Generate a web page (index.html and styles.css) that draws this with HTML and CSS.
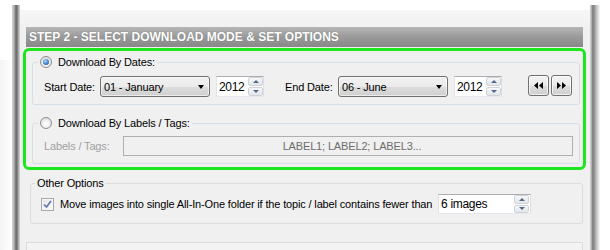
FILE: index.html
```html
<!DOCTYPE html>
<html>
<head>
<meta charset="utf-8">
<link rel="stylesheet" href="styles.css">
</head>
<body>
<div class="frame">
  <div class="lbar"></div>
  <div class="content">
    <div class="header">STEP 2 - SELECT DOWNLOAD MODE &amp; SET OPTIONS</div>
    <div class="green">
      <fieldset class="group g1">
        <legend><span class="radio on"></span>Download By Dates:</legend>
        <div class="row">
          <span class="lbl lbl-start">Start Date:</span>
          <div class="combo"><span>01 - January</span><i class="arrow"></i></div>
          <div class="spin year"><span class="val">2012</span><div class="spinbtns"><b class="up"></b><b class="down"></b></div></div>
          <span class="lbl lbl-end">End Date:</span>
          <div class="combo"><span>06 - June</span><i class="arrow"></i></div>
          <div class="spin year"><span class="val">2012</span><div class="spinbtns"><b class="up"></b><b class="down"></b></div></div>
          <div class="navs">
            <button class="nav"><svg width="9" height="7" viewBox="0 0 9 7"><path d="M4 0V7L0 3.5Z M9 0V7L5 3.5Z" fill="#000"/></svg></button>
            <button class="nav"><svg width="9" height="7" viewBox="0 0 9 7"><path d="M0 0V7L4 3.5Z M5 0V7L9 3.5Z" fill="#000"/></svg></button>
          </div>
        </div>
      </fieldset>
      <fieldset class="group g2">
        <legend><span class="radio"></span>Download By Labels / Tags:</legend>
        <div class="row">
          <span class="lbl dis lbl-tags">Labels / Tags:</span>
          <div class="tags">LABEL1; LABEL2; LABEL3...</div>
        </div>
      </fieldset>
    </div>
    <fieldset class="group other">
      <legend>Other Options</legend>
      <div class="row">
        <span class="check"><svg width="9" height="9" viewBox="0 0 9 9"><path d="M1 4.5L3.5 7L8 1" fill="none" stroke="#6476a8" stroke-width="1.7"/></svg></span>
        <span class="movetext">Move images into single All-In-One folder if the topic / label contains fewer than</span>
        <div class="spin count"><span class="val">6 images</span><div class="spinbtns"><b class="up"></b><b class="down"></b></div></div>
      </div>
    </fieldset>
    <div class="bottom"></div>
  </div>
  <div class="rbar"></div>
</div>
</body>
</html>
```

FILE: styles.css
```css
html, body {
  margin: 0;
  padding: 0;
  background: #ffffff;
}
body {
  font-family: "Liberation Sans", Arial, sans-serif;
  font-size: 11px;
  letter-spacing: -0.15px;
  color: #000;
  overflow: hidden;
  height: 250px;
  background: linear-gradient(to right, #f4f4f4 0, #ffffff 12px) no-repeat 0 60px / 12px 190px, #fff;
}
.frame {
  margin: 5px 0 0 12px;
  width: 588px;
  height: 245px;
  display: flex;
}
.lbar {
  width: 8px;
  background: linear-gradient(to right, #d6d6d6 0, #b4b4b4 25%, #7a7a7a 45%, #6a6a6a 60%, #a8a8a8 80%, #d8d8d8 100%);
}
.rbar {
  width: 10px;
  background: linear-gradient(to right, #dcdcdc 0, #b0b0b0 15%, #7c7c7c 28%, #8e8e8e 40%, #b8b8b8 60%, #e2e2e2 85%, #fbfbfb 100%);
}
.content {
  flex: 1;
  margin-top: 5px;
  background: linear-gradient(#f6f6f6, #f0f0f0 22px);
  padding: 17px 7px 0 6px;
}
.header {
  height: 20px;
  line-height: 21px;
  padding-left: 3px;
  background: linear-gradient(#b6b6b6, #9a9a9a 50%, #888888);
  color: #ffffff;
  font-weight: bold;
  font-size: 12px;
  letter-spacing: 0;
  text-shadow: 0 0 1px #6a6a6a;
}
.green {
  margin: 1px -3px 0 -3px;
  border: 3px solid #1ee61e;
  border-radius: 6px;
  padding: 4px 3px 3px 6px;
  background: #f0f0f0;
}
.group {
  margin: 0;
  padding: 0;
  border: 1px solid #d5dfe5;
  border-radius: 3px;
  min-width: 0;
}
.group legend {
  margin-left: 5px;
  padding: 0 2px;
  height: 14px;
  line-height: 14px;
  display: flex;
  align-items: center;
}
.g2 {
  margin-top: 11px;
}
.row {
  display: flex;
  align-items: center;
  padding-left: 11px;
}
.g1 .row {
  padding-top: 7px;
  padding-bottom: 7px;
  height: 21px;
}
.g2 .row {
  padding-top: 6px;
  padding-bottom: 7px;
  height: 20px;
}
.radio {
  width: 10px;
  height: 10px;
  border: 1px solid #8f8f8f;
  border-radius: 50%;
  background: radial-gradient(circle at 50% 60%, #ffffff 0, #f2f2f2 40%, #cfcfcf 100%);
  margin-right: 6px;
  position: relative;
  box-sizing: content-box;
}
.radio.on::after {
  content: "";
  position: absolute;
  left: 2px;
  top: 2px;
  width: 6px;
  height: 6px;
  border-radius: 50%;
  background: radial-gradient(circle at 40% 35%, #b9dcff 0, #4d8fd8 45%, #163f86 100%);
}
.lbl {
  white-space: nowrap;
}
.lbl-start {
  width: 56px;
}
.lbl-end {
  width: 53px;
  margin-left: 21px;
}
.lbl-tags {
  width: 79px;
}
.dis {
  color: #a0a0a0;
}
.combo {
  width: 110px;
  height: 21px;
  box-sizing: border-box;
  border: 1px solid #707070;
  border-radius: 3px;
  background: linear-gradient(#f2f2f2 0, #ebebeb 50%, #dddddd 51%, #cfcfcf 100%);
  display: flex;
  align-items: center;
  justify-content: space-between;
  padding: 0 4px 0 3px;
  box-shadow: inset 0 0 0 1px rgba(255,255,255,0.6);
}
.arrow {
  width: 0;
  height: 0;
  border-left: 3.5px solid transparent;
  border-right: 3.5px solid transparent;
  border-top: 4px solid #000;
  margin-right: 1px;
}
.spin {
  height: 21px;
  box-sizing: border-box;
  border: 1px solid #abadb3;
  border-color: #abadb3 #dbdfe6 #e3e9ef #e2e3ea;
  background: #fff;
  display: flex;
  align-items: center;
  justify-content: space-between;
  padding-left: 2px;
}
.year {
  width: 48px;
  margin-left: 6px;
}
.spin .val {
  font-size: 12px;
  letter-spacing: -0.3px;
}
.spinbtns {
  width: 15px;
  height: 19px;
  display: flex;
  flex-direction: column;
  gap: 1px;
}
.spinbtns b {
  flex: 1;
  border: 1px solid #cfd3d8;
  border-radius: 2px;
  background: linear-gradient(#f6f7f8, #e3e6ea);
  display: flex;
  align-items: center;
  justify-content: center;
}
.spinbtns b::after {
  content: "";
  width: 0;
  height: 0;
  border-left: 3.5px solid transparent;
  border-right: 3.5px solid transparent;
}
.spinbtns .up::after {
  border-bottom: 3px solid #51688c;
}
.spinbtns .down::after {
  border-top: 3px solid #51688c;
}
.navs {
  display: flex;
  gap: 2px;
  margin-left: 26px;
  margin-top: -3px;
}
.nav {
  width: 21px;
  height: 21px;
  padding: 0;
  border: 1px solid #707070;
  border-radius: 3px;
  background: linear-gradient(#f2f2f2 0, #ebebeb 50%, #dddddd 51%, #cfcfcf 100%);
  box-shadow: inset 0 0 0 1px rgba(255,255,255,0.7);
  display: flex;
  align-items: center;
  justify-content: center;
}
.tags {
  width: 450px;
  height: 20px;
  box-sizing: border-box;
  border: 1px solid #afafaf;
  background: #f0f0f0;
  color: #6d6d6d;
  display: flex;
  align-items: center;
  justify-content: center;
  padding-left: 8px;
}
.other {
  margin: 6px 0 0 4px;
  border-color: #dcdcdc;
}
.other legend {
  margin-left: 4px;
  padding: 0 1px 0 2px;
}
.other .row {
  padding: 4px 0 9px 10px;
  height: 20px;
}
.check {
  width: 11px;
  height: 11px;
  border: 1px solid #a4a9b0;
  background: linear-gradient(135deg, #e2e5ea, #fbfbfc);
  box-shadow: inset 0 0 0 1px #f6f6f6;
  display: flex;
  align-items: center;
  justify-content: center;
  margin-right: 6px;
}
.movetext {
  width: 378px;
  white-space: nowrap;
}
.count {
  width: 93px;
  height: 20px;
}
.count .spinbtns {
  height: 18px;
  margin-right: 1px;
}
.bottom {
  margin-top: 18px;
  height: 12px;
  border: 1px solid #dcdcdc;
  border-bottom: none;
  background: #f3f3f3;
}
```
